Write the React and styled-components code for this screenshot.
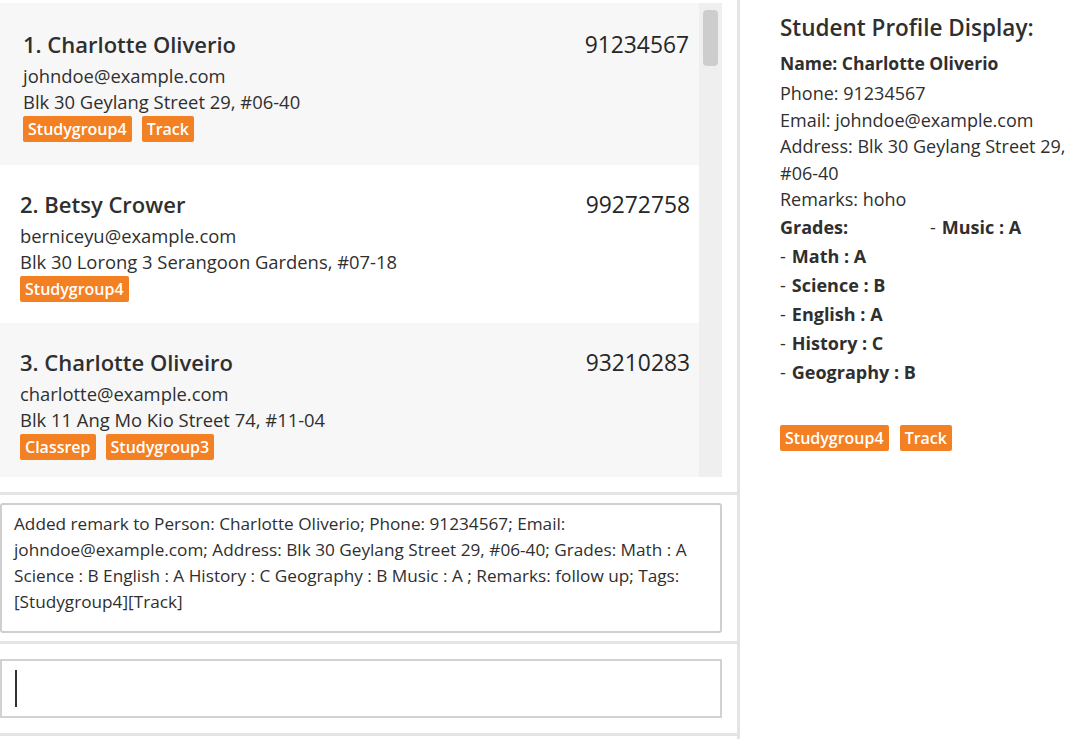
import React from "react";
import styled, { createGlobalStyle } from "styled-components";

const GlobalStyle = createGlobalStyle`
  html, body {
    margin: 0;
    padding: 0;
    background: #ffffff;
  }
  body {
    font-family: "Open Sans", "Noto Sans", sans-serif;
    color: #2f2f2f;
  }
`;

const persons = [
  {
    name: "Charlotte Oliverio",
    phone: "91234567",
    email: "johndoe@example.com",
    address: "Blk 30 Geylang Street 29, #06-40",
    tags: ["Studygroup4", "Track"],
    selected: true,
  },
  {
    name: "Betsy Crower",
    phone: "99272758",
    email: "berniceyu@example.com",
    address: "Blk 30 Lorong 3 Serangoon Gardens, #07-18",
    tags: ["Studygroup4"],
  },
  {
    name: "Charlotte Oliveiro",
    phone: "93210283",
    email: "charlotte@example.com",
    address: "Blk 11 Ang Mo Kio Street 74, #11-04",
    tags: ["Classrep", "Studygroup3"],
  },
];

const grades = [
  "Math : A",
  "Science : B",
  "English : A",
  "History : C",
  "Geography : B",
  "Music : A",
];

function App() {
  return (
    <>
      <GlobalStyle />
      <Page>
        <LeftPane>
          <ListPanel>
            <ListBox>
              <Cards>
                {persons.map((p, i) => (
                  <Card key={p.phone} striped={i % 2 === 0} selected={p.selected}>
                    <CardHead>
                      <Name>
                        {i + 1}. {p.name}
                      </Name>
                      <Phone>{p.phone}</Phone>
                    </CardHead>
                    <Line>{p.email}</Line>
                    <Line>{p.address}</Line>
                    <Tags>
                      {p.tags.map((t) => (
                        <Tag key={t}>{t}</Tag>
                      ))}
                    </Tags>
                  </Card>
                ))}
              </Cards>
              <ScrollTrack>
                <ScrollThumb />
              </ScrollTrack>
            </ListBox>
          </ListPanel>
          <ResultPanel>
            <ResultBox>
              Added remark to Person: Charlotte Oliverio; Phone: 91234567; Email:
              johndoe@example.com; Address: Blk 30 Geylang Street 29, #06-40; Grades: Math : A
              Science : B English : A History : C Geography : B Music : A ; Remarks: follow up; Tags:
              [Studygroup4][Track]
            </ResultBox>
          </ResultPanel>
          <CommandPanel>
            <CommandBox>
              <Caret />
            </CommandBox>
          </CommandPanel>
        </LeftPane>
        <ProfilePane>
          <Title>Student Profile Display:</Title>
          <ProfileName>Name: Charlotte Oliverio</ProfileName>
          <Detail>Phone: 91234567</Detail>
          <Detail>Email: johndoe@example.com</Detail>
          <Detail>Address: Blk 30 Geylang Street 29, #06-40</Detail>
          <Detail>Remarks: hoho</Detail>
          <GradeGrid>
            <GradeItem>Grades:</GradeItem>
            {grades.map((g) => (
              <GradeItem key={g}>
                <Dash>-</Dash>
                {g}
              </GradeItem>
            ))}
          </GradeGrid>
          <ProfileTags>
            <Tag>Studygroup4</Tag>
            <Tag>Track</Tag>
          </ProfileTags>
        </ProfilePane>
      </Page>
    </>
  );
}

const Page = styled.div`
  display: flex;
  width: 1084px;
  height: 739px;
  overflow: hidden;
`;

const LeftPane = styled.div`
  width: 737px;
  flex-shrink: 0;
  display: flex;
  flex-direction: column;
  border-right: 3px solid #e4e4e4;
`;

const ListPanel = styled.div`
  padding: 3px 15px 0 0;
  border-bottom: 3px solid #e4e4e4;
  box-sizing: border-box;
  height: 495px;
`;

const ListBox = styled.div`
  display: flex;
  height: 474px;
  overflow: hidden;
`;

const Cards = styled.div`
  width: 699px;
  display: flex;
  flex-direction: column;
`;

const Card = styled.div`
  flex-shrink: 0;
  background: ${(p) => (p.striped ? "#f7f7f7" : "#ffffff")};
  padding: ${(p) => (p.selected ? "26px 10px 23px 23px" : "24px 9px 21px 20px")};
`;

const CardHead = styled.div`
  display: flex;
  justify-content: space-between;
  align-items: center;
  height: 30px;
  margin-bottom: 4px;
`;

const Name = styled.div`
  font-size: 22px;
  font-weight: 600;
`;

const Phone = styled.div`
  font-size: 22.8px;
  font-weight: 500;
  color: #262626;
`;

const Line = styled.div`
  font-size: 18.4px;
  line-height: 26px;
`;

const Tags = styled.div`
  display: flex;
  gap: 10px;
  margin-top: 1px;
`;

const Tag = styled.span`
  display: inline-block;
  background: #f38022;
  color: #ffffff;
  font-size: 16px;
  font-weight: 600;
  line-height: 26px;
  padding: 0 5px;
  border-radius: 2px;
`;

const ScrollTrack = styled.div`
  width: 23px;
  background: #efefef;
  padding: 7px 4px 0;
  box-sizing: border-box;
`;

const ScrollThumb = styled.div`
  height: 56px;
  background: #cdcdcd;
  border-radius: 4px;
`;

const ResultPanel = styled.div`
  padding: 8px 15px 8px 0;
  border-bottom: 3px solid #e4e4e4;
`;

const ResultBox = styled.div`
  height: 130px;
  box-sizing: border-box;
  border: 2px solid #cfcfcf;
  border-radius: 3px;
  padding: 6px 12px;
  font-size: 17.2px;
  line-height: 26px;
`;

const CommandPanel = styled.div`
  padding: 15px 15px 15px 0;
  border-bottom: 3px solid #e4e4e4;
`;

const CommandBox = styled.div`
  height: 59px;
  box-sizing: border-box;
  border: 2px solid #d2d2d2;
  padding: 9px 13px;
`;

const Caret = styled.div`
  width: 2px;
  height: 37px;
  background: #333;
`;

const ProfilePane = styled.div`
  flex: 1;
  padding: 13px 10px 0 40px;
  box-sizing: border-box;
`;

const Title = styled.div`
  font-size: 22.5px;
  font-weight: 600;
  line-height: 30px;
  margin-bottom: 7px;
`;

const ProfileName = styled.div`
  font-size: 17.5px;
  font-weight: 700;
  line-height: 26px;
  margin-bottom: 4px;
`;

const Detail = styled.div`
  font-size: 18px;
  line-height: 26.5px;
  width: 300px;
`;

const GradeGrid = styled.div`
  display: grid;
  grid-auto-flow: column;
  grid-template-rows: repeat(6, 29px);
  grid-template-columns: 150px 150px;
  margin-top: 0;
`;

const GradeItem = styled.div`
  font-size: 18px;
  font-weight: 700;
  line-height: 29px;
`;

const Dash = styled.span`
  font-weight: 400;
  margin-right: 6px;
`;

const ProfileTags = styled.div`
  display: flex;
  gap: 11px;
  margin-top: 38px;
`;

export default App;
